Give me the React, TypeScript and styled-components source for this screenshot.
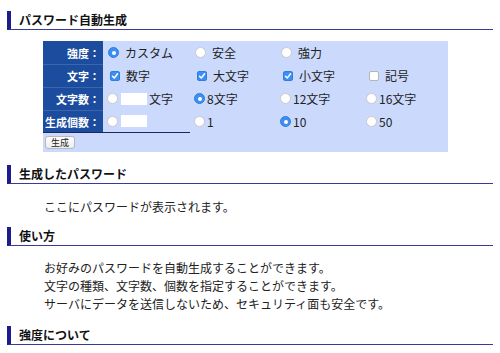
import styled, { createGlobalStyle } from 'styled-components'

const GlobalStyle = createGlobalStyle`
  html, body {
    margin: 0;
    padding: 0;
    background: #fff;
  }
  body {
    font-family: 'Noto Sans CJK JP', 'Noto Sans', sans-serif;
    color: #222;
    font-size: 12px;
  }
`

const Page = styled.div`
  padding: 11px 7px 0 7px;
  display: flex;
  flex-direction: column;
`

const Heading = styled.h2<{ $gap?: number }>`
  margin: ${(p) => p.$gap ?? 0}px 0 0 0;
  padding: 0 0 0 8px;
  border-left: 4px solid #1c1c8c;
  border-bottom: 1px solid #3a3a98;
  font-size: 12px;
  font-weight: 700;
  line-height: 18px;
  color: #111;
`

const Panel = styled.div`
  margin: 11px 0 0 36px;
  width: 405px;
  background: #cbdafc;
  display: flex;
  flex-direction: column;
`

const Grid = styled.div`
  display: grid;
  grid-template-columns: 60px 87px 86px 86px 86px;
  grid-auto-rows: 23px;
`

const Label = styled.div<{ $last?: boolean }>`
  background: #1b4c9d;
  color: #fff;
  font-weight: 700;
  font-size: 11px;
  display: flex;
  align-items: center;
  justify-content: flex-end;
  padding-right: 3px;
  border-top: 1px solid #3b65ad;
  border-bottom: ${(p) => (p.$last ? '1px solid #1a2660' : 'none')};
  white-space: nowrap;
  &:first-child {
    border-top: none;
  }
`

const Cell = styled.div<{ $tight?: boolean; $last?: boolean }>`
  display: flex;
  align-items: center;
  padding-left: ${(p) => (p.$tight ? 4 : 5)}px;
  gap: ${(p) => (p.$tight ? 3 : 6)}px;
  font-size: 12px;
  white-space: nowrap;
  border-bottom: ${(p) => (p.$last ? '1px solid #1a2660' : 'none')};
`

const Radio = styled.span<{ $on?: boolean }>`
  flex: none;
  width: 11px;
  height: 11px;
  box-sizing: border-box;
  border-radius: 50%;
  background: ${(p) => (p.$on ? '#3c8ef3' : '#fff')};
  border: 1px solid ${(p) => (p.$on ? '#2f7ee0' : '#c9c9c9')};
  display: flex;
  align-items: center;
  justify-content: center;
  &::after {
    content: '';
    width: 4px;
    height: 4px;
    border-radius: 50%;
    background: ${(p) => (p.$on ? '#fff' : 'transparent')};
  }
`

const Check = styled.span<{ $on?: boolean }>`
  flex: none;
  width: 10px;
  height: 10px;
  margin-left: 2px;
  box-sizing: border-box;
  border-radius: 2px;
  background: ${(p) => (p.$on ? '#3c8ef3' : '#fff')};
  border: 1px solid ${(p) => (p.$on ? '#2f7ee0' : '#b5b5b5')};
  display: flex;
  align-items: center;
  justify-content: center;
`

const TextBox = styled.span`
  flex: none;
  width: 26px;
  height: 12px;
  background: #fff;
`

const InlineText = styled.span`
  margin-left: -1px;
`

const ButtonRow = styled.div`
  height: 19px;
  display: flex;
  align-items: center;
  padding-left: 2px;
`

const Button = styled.button`
  font-family: 'Noto Sans CJK JP', sans-serif;
  font-size: 9px;
  line-height: 11px;
  padding: 1px 5px;
  height: 13px;
  border: 1px solid #b8b8b8;
  border-radius: 3px;
  background: linear-gradient(#ffffff, #ececec);
  color: #222;
  display: flex;
  align-items: center;
`

const Para = styled.div<{ $gap: number }>`
  margin: ${(p) => p.$gap}px 0 0 37px;
  font-size: 12px;
  line-height: 18px;
  color: #222;
`

function Tick() {
  return (
    <svg width="8" height="8" viewBox="0 0 8 8">
      <path d="M1.5 4.2 L3.3 6 L6.6 1.8" fill="none" stroke="#fff" strokeWidth="1.5" strokeLinecap="round" strokeLinejoin="round" />
    </svg>
  )
}

export default function App() {
  return (
    <>
      <GlobalStyle />
      <Page>
        <Heading>パスワード自動生成</Heading>
        <Panel>
          <Grid>
            <Label>強度：</Label>
            <Cell><Radio $on />カスタム</Cell>
            <Cell><Radio />安全</Cell>
            <Cell><Radio />強力</Cell>
            <Cell />

            <Label>文字：</Label>
            <Cell><Check $on><Tick /></Check>数字</Cell>
            <Cell><Check $on><Tick /></Check>大文字</Cell>
            <Cell><Check $on><Tick /></Check>小文字</Cell>
            <Cell><Check />記号</Cell>

            <Label>文字数：</Label>
            <Cell $tight><Radio /><TextBox /><InlineText>文字</InlineText></Cell>
            <Cell $tight><Radio $on /><InlineText>8文字</InlineText></Cell>
            <Cell $tight><Radio /><InlineText>12文字</InlineText></Cell>
            <Cell $tight><Radio /><InlineText>16文字</InlineText></Cell>

            <Label $last>生成個数：</Label>
            <Cell $tight $last><Radio /><TextBox /></Cell>
            <Cell $tight><Radio /><InlineText>1</InlineText></Cell>
            <Cell $tight><Radio $on /><InlineText>10</InlineText></Cell>
            <Cell $tight><Radio /><InlineText>50</InlineText></Cell>
          </Grid>
          <ButtonRow>
            <Button>生成</Button>
          </ButtonRow>
        </Panel>

        <Heading $gap={13}>生成したパスワード</Heading>
        <Para $gap={14}>ここにパスワードが表示されます。</Para>

        <Heading $gap={11}>使い方</Heading>
        <Para $gap={13}>
          お好みのパスワードを自動生成することができます。
          <br />
          文字の種類、文字数、個数を指定することができます。
          <br />
          サーバにデータを送信しないため、セキュリティ面も安全です。
        </Para>

        <Heading $gap={13}>強度について</Heading>
      </Page>
    </>
  )
}
